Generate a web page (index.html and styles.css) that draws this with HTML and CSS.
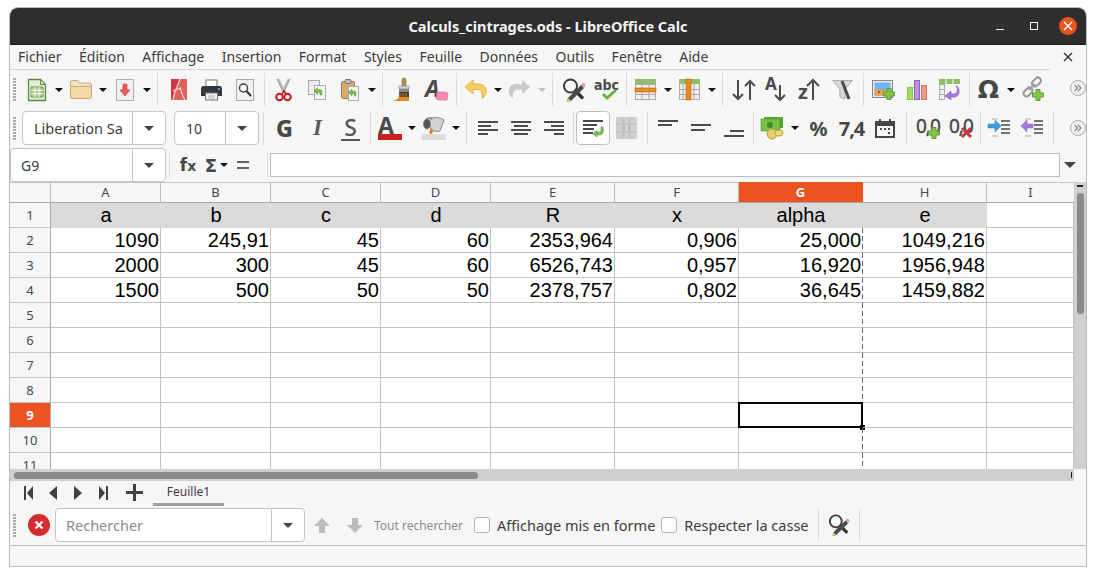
FILE: index.html
```html
<!DOCTYPE html>
<html lang="fr">
<head>
<meta charset="utf-8">
<title>Calculs_cintrages.ods - LibreOffice Calc</title>
<link rel="stylesheet" href="styles.css">
</head>
<body>
<svg class="defs" width="0" height="0">
  <symbol id="findpen" viewBox="0 0 24 24">
    <circle cx="8.5" cy="8" r="6.5" fill="#fff" fill-opacity=".6" stroke="#3c3c3c" stroke-width="2"/>
    <path d="M13 12.5l8 8" stroke="#333" stroke-width="3.4"/>
    <path d="M6 20L19 7l3 3L9 23l-4 1z" fill="#4a4a4a"/>
    <path d="M19 7l1.500-1.500a1.500 1.500 0 0 1 2 0l.5.5a1.500 1.500 0 0 1 0 2L22 10z" fill="#e88cc0"/>
    <path d="M6 20l3 3-4 1z" fill="#e8c860"/>
  </symbol>
  <symbol id="plus" viewBox="0 0 12 12">
    <path d="M4 .5h4V4h3.500v4H8v3.500H4V8H.5V4H4z" fill="#84c24a" stroke="#5f9a32"/>
  </symbol>
</svg>
<div class="window">
  <header class="titlebar">
    <span class="title">Calculs_cintrages.ods - LibreOffice Calc</span>
    <div class="wincontrols">
      <span class="wmin"></span>
      <span class="wmax"></span>
      <span class="wclose"><svg width="10" height="10" viewBox="0 0 10 10"><path d="M1 1l8 8M9 1l-8 8" stroke="#fff" stroke-width="1.500"/></svg></span>
    </div>
  </header>
  <nav class="menubar">
    <div class="menus">
      <span>Fichier</span><span>Édition</span><span>Affichage</span><span>Insertion</span><span>Format</span><span>Styles</span><span>Feuille</span><span>Données</span><span>Outils</span><span>Fenêtre</span><span>Aide</span>
    </div>
    <svg class="menuclose" width="10" height="10" viewBox="0 0 10 10"><path d="M1 1l8 8M9 1l-8 8" stroke="#333" stroke-width="1.400"/></svg>
  </nav>

  <div class="toolbar">
    <span class="grip"></span>
    <span class="btn"><svg width="18" height="22" viewBox="0 0 18 22"><path d="M.5.5h12l5 5v16H.5z" fill="#e4eed8" stroke="#5d8a3e" stroke-width="1.300"/><path d="M12.500.5v5h5z" fill="#cfe0b8" stroke="#5d8a3e"/><path d="M3 8h12v10H3z" fill="#a9cf85" stroke="#6f9c4c"/><path d="M3 11.300h12M3 14.600h12M7 8v10M11 8v10" stroke="#fff"/></svg></span>
    <span class="arrow"></span>
    <span class="btn"><svg width="22" height="19" viewBox="0 0 22 19"><path d="M.5 3a2 2 0 0 1 2-2.500h5l2 2.500h10a2 2 0 0 1 2 2v11.500a2 2 0 0 1-2 2h-17a2 2 0 0 1-2-2z" fill="#efe0c0" stroke="#c4ab7c"/><path d="M.5 6.500h21v10a2 2 0 0 1-2 2h-17a2 2 0 0 1-2-2z" fill="#f3d9a8" stroke="#c9a86e"/></svg></span>
    <span class="arrow"></span>
    <span class="btn"><svg width="18" height="22" viewBox="0 0 18 22"><rect x=".5" y=".5" width="17" height="21" fill="#f0f0f0" stroke="#b0b0b0"/><path d="M7 5h4v6h3l-5 6-5-6h3z" fill="#ea5a5a" stroke="#c83c3c" stroke-width=".6"/></svg></span>
    <span class="arrow"></span>
    <span class="sep wide"></span>
    <span class="btn"><svg width="16" height="21" viewBox="0 0 16 21"><rect width="16" height="21" fill="#c93c44"/><path d="M2 21C3 13 7 7 9 0h7v21z" fill="#e0605a"/><path d="M2 21C3 13 7 7 9 0M9 8c1 5 3 10 5 13M2 12l8-3" stroke="#f6dcdc" stroke-width="1.200" fill="none"/></svg></span>
    <span class="btn"><svg width="21" height="20" viewBox="0 0 21 20"><rect x="5" y="0" width="11" height="7" fill="#fff" stroke="#777"/><path d="M2.500 6h16A2.500 2.500 0 0 1 21 8.500V16h-4v-2H4v2H0V8.500A2.500 2.500 0 0 1 2.500 6z" fill="#34393d"/><rect x="17" y="8" width="2" height="2" fill="#35a8e0"/><rect x="4.500" y="13" width="12" height="7" fill="#f4f4f4" stroke="#777"/><path d="M7 16h7M7 18h7" stroke="#aaa"/></svg></span>
    <span class="btn"><svg width="18" height="22" viewBox="0 0 18 22"><rect x=".5" y=".5" width="17" height="21" fill="#f0f0f0" stroke="#aaa"/><circle cx="7.500" cy="9" r="4" fill="#fff" stroke="#444" stroke-width="1.500"/><path d="M10.500 12l4.500 5" stroke="#333" stroke-width="2"/></svg></span>
    <span class="sep"></span>
    <span class="btn"><svg width="17" height="22" viewBox="0 0 17 22"><path d="M3 0l6.500 13M14 0L7.500 13" stroke="#b8b8b8" stroke-width="2.400" fill="none"/><path d="M2 0l5.500 12M15 0L9.500 12" stroke="#8a8a8a" stroke-width=".7" fill="none"/><circle cx="4.500" cy="18" r="3.300" fill="none" stroke="#c8161d" stroke-width="2"/><circle cx="12.500" cy="18" r="3.300" fill="none" stroke="#c8161d" stroke-width="2"/><path d="M7 15l2-3 2 3" fill="none" stroke="#c8161d" stroke-width="1.600"/></svg></span>
    <span class="btn"><svg width="18" height="20" viewBox="0 0 18 20"><rect x=".5" y=".5" width="11" height="14" fill="#eee" stroke="#aaa"/><rect x="6.500" y="5.500" width="11" height="14" fill="#f6f6f6" stroke="#aaa"/><path d="M14 15v-3.500a2 2 0 0 0-2-2H9.500V7.500L6 11l3.500 3.500v-2h1.500a1 1 0 0 1 1 1V15z" fill="#7cbc54" stroke="#5c9a38" stroke-width=".5"/></svg></span>
    <span class="btn"><svg width="18" height="22" viewBox="0 0 18 22"><rect x=".5" y="2.500" width="13" height="17" rx="1" fill="#d8aa6c" stroke="#9a7a48"/><rect x="4" y=".5" width="6" height="4" rx="1" fill="#bbb" stroke="#777"/><rect x="7.500" y="7.500" width="10" height="14" fill="#f6f6f6" stroke="#aaa"/><path d="M15 17v-3a2 2 0 0 0-2-2h-2v-2l-3.500 3.500L11 17v-2h1.500a1 1 0 0 1 1 1v1z" fill="#7cbc54" stroke="#5c9a38" stroke-width=".5"/></svg></span>
    <span class="arrow"></span>
    <span class="sep wide"></span>
    <span class="btn"><svg width="21" height="23" viewBox="0 0 21 23"><rect x="9" y="0" width="4" height="9" rx="2" fill="#b98c50" stroke="#8a6530" stroke-width=".6"/><rect x="6" y="8" width="10" height="3" fill="#d0d0d0" stroke="#888" stroke-width=".6"/><rect x="6" y="11" width="10" height="3" fill="#888"/><path d="M6 14h10v6H6z" fill="#3f3a34"/><path d="M7 15v5M10 15v5M13 15v5" stroke="#e08a2a"/><path d="M0 23c3-1 5-2 6-4h10v4z" fill="#e8871e"/></svg></span>
    <span class="btn"><svg width="23" height="22" viewBox="0 0 23 22"><text x="0" y="18" class="ico-a">A</text><path d="M12 13h8l3 1-1 7h-9l-2-1z" fill="#f08cb8" stroke="#d86a9c" stroke-width=".6"/></svg></span>
    <span class="sep"></span>
    <span class="btn"><svg width="22" height="20" viewBox="0 0 22 20"><path d="M8 0L0 7l8 7V9.500h4c4 0 6 3 5 9 3-2 5-5 4-9-1-4-4-5.500-8-5.500H8z" fill="#f6cf60" stroke="#d8a52e" stroke-width=".8"/></svg></span>
    <span class="arrow"></span>
    <span class="btn"><svg width="21" height="20" viewBox="0 0 21 20"><path d="M13 0l8 7-8 7V9.500H9c-4 0-6 3-5 9-3-2-5-5-4-9 1-4 4-5.500 8-5.500h5z" fill="#c8c8c8"/></svg></span>
    <span class="arrow dim"></span>
    <span class="sep wide"></span>
    <span class="btn"><svg width="24" height="24"><use href="#findpen"/></svg></span>
    <span class="btn"><svg width="26" height="24" viewBox="0 0 26 24"><text x="0" y="12" class="ico-abc">abc</text><path d="M9 16l4 4 9-8" fill="none" stroke="#6cb33f" stroke-width="3"/></svg></span>
    <span class="sep"></span>
    <span class="btn"><svg width="21" height="21" viewBox="0 0 21 21"><rect x=".5" y=".5" width="20" height="20" fill="#f0f0f0" stroke="#aaa"/><rect width="21" height="5" fill="#8cc063"/><path d="M7 0v21M14 0v21M0 5.500h21M0 15.500h21" stroke="#aaa"/><rect y="9" width="21" height="4" fill="#e98a20" stroke="#c46a10" stroke-width=".6"/></svg></span>
    <span class="arrow"></span>
    <span class="btn"><svg width="21" height="21" viewBox="0 0 21 21"><rect x=".5" y=".5" width="20" height="20" fill="#f0f0f0" stroke="#aaa"/><rect width="21" height="5" fill="#8cc063"/><path d="M0 10.500h21M0 15.500h21M15 0v21M4 0v21" stroke="#aaa"/><rect x="7" width="5" height="21" fill="#e98a20" stroke="#c46a10" stroke-width=".6"/></svg></span>
    <span class="arrow"></span>
    <span class="sep wide"></span>
    <span class="btn"><svg width="24" height="22" viewBox="0 0 24 22"><path d="M6 1v19M1 15l5 5 5-5M18 21V2M13 7l5-5 5 5" fill="none" stroke="#4b4b4b" stroke-width="2"/></svg></span>
    <span class="btn"><svg width="23" height="23" viewBox="0 0 23 23"><text x="0" y="12" class="ico-sort">A</text><path d="M15 7v15M10 17l5 5 5-5" fill="none" stroke="#4b4b4b" stroke-width="2"/></svg></span>
    <span class="btn"><svg width="23" height="23" viewBox="0 0 23 23"><text x="0" y="21" class="ico-sort big">z</text><path d="M15 22V2M9 8l6-6 6 6" fill="none" stroke="#4b4b4b" stroke-width="2"/></svg></span>
    <span class="btn"><svg width="21" height="20" viewBox="0 0 21 20"><path d="M.5.500h20L13 9v10l-5-2V9z" fill="#d8d8d8" stroke="#aaa"/><path d="M10 1l7 18" stroke="#4a4a4a" stroke-width="3"/></svg></span>
    <span class="sep mid"></span>
    <span class="btn"><svg width="23" height="20" viewBox="0 0 23 20"><rect x=".5" y=".5" width="20" height="17" fill="#e8e8e8" stroke="#888"/><rect x="2.500" y="2.500" width="16" height="13" fill="#6fb5e5"/><path d="M2.500 10h16v5.500h-16z" fill="#e7a33c"/><path d="M6 11h2v2H6z" fill="#d83b2a"/><use href="#plus" x="11" y="8" width="12" height="12"/></svg></span>
    <span class="btn"><svg width="20" height="20" viewBox="0 0 20 20"><rect x=".5" y="7.500" width="5" height="12" fill="#a4d95c" stroke="#8cc04a"/><rect x="7.500" y=".5" width="5" height="19" fill="#b796dc" stroke="#8a62b8"/><rect x="14.500" y="5.500" width="5" height="14" fill="#ec9a8a" stroke="#d07866"/></svg></span>
    <span class="btn"><svg width="21" height="21" viewBox="0 0 21 21"><rect width="21" height="5" fill="#8cc063"/><path d="M7 0v5M14 0v5" stroke="#fff"/><rect x=".5" y="5.500" width="5" height="15" fill="#eee" stroke="#aaa"/><path d="M0 10.500h5M0 15.500h5" stroke="#aaa"/><path d="M17 7c3 4 1 8-3 8h-2v-3l-6 5 6 4v-3h3c5 0 7-6 3-11z" fill="#a878d8" stroke="#8458b8" stroke-width=".6"/></svg></span>
    <span class="sep"></span>
    <span class="btn"><span class="omega">Ω</span></span>
    <span class="arrow"></span>
    <span class="btn"><svg width="23" height="23" viewBox="0 0 23 23"><g fill="none" stroke="#9a9a9a" stroke-width="2"><rect x="10.500" y="1" width="10" height="6" rx="3" transform="rotate(-45 15.500 4)"/><rect x="2" y="11" width="10" height="6" rx="3" transform="rotate(-45 7 14)"/><path d="M8 12l6-6"/></g><use href="#plus" x="11" y="11" width="12" height="12"/></svg></span>
    <span class="more"><svg width="16" height="16" viewBox="0 0 16 16"><circle cx="8" cy="8" r="7.500" fill="#f2f2f2" stroke="#aaa"/><path d="M4.500 5l3 3-3 3M8 5l3 3-3 3" fill="none" stroke="#8a8a8a" stroke-width="1.300"/></svg></span>
  </div>

  <div class="toolbar fmt">
    <span class="grip"></span>
    <div class="combo font"><span class="val">Liberation Sa</span><span class="drop"></span></div>
    <div class="combo size"><span class="val">10</span><span class="drop"></span></div>
    <span class="sep nine"></span>
    <span class="btn"><span class="tx-g">G</span></span>
    <span class="btn"><span class="tx-i">I</span></span>
    <span class="btn"><span class="tx-s">S</span></span>
    <span class="sep"></span>
    <span class="btn"><svg width="24" height="23" viewBox="0 0 24 23"><text x="0" y="17" class="ico-color">A</text><rect y="17" width="24" height="6" fill="#c9211e"/></svg></span>
    <span class="arrow"></span>
    <span class="btn"><svg width="24" height="24" viewBox="0 0 24 24"><path d="M6 3c5-2 12-2 16 1l-4 11c-3 1-7 0-9-1z" fill="#d4d4d4" stroke="#888"/><ellipse cx="5" cy="8" rx="3.500" ry="5" fill="#555" stroke="#888"/><path d="M3 4c3-3 7-3 7 0" fill="none" stroke="#777"/><rect y="18" width="24" height="6" fill="#dcdcdc"/><path d="M7 17c1-3 2-4 3-5 1 2 1 4 0 6z" fill="#e8781e"/></svg></span>
    <span class="arrow"></span>
    <span class="sep wide"></span>
    <span class="btn"><svg width="20" height="15" viewBox="0 0 20 15"><path d="M0 1h20M0 5h13M0 9h20M0 13h10" stroke="#4a4a4a" stroke-width="2"/></svg></span>
    <span class="btn"><svg width="20" height="15" viewBox="0 0 20 15"><path d="M0 1h20M3 5h14M0 9h20M3 13h14" stroke="#4a4a4a" stroke-width="2"/></svg></span>
    <span class="btn"><svg width="20" height="15" viewBox="0 0 20 15"><path d="M0 1h20M7 5h13M0 9h20M10 13h10" stroke="#4a4a4a" stroke-width="2"/></svg></span>
    <span class="sep"></span>
    <span class="btn active"><svg width="21" height="17" viewBox="0 0 21 17"><path d="M0 1h20M0 5h14M0 9h11M0 13h10" stroke="#4a4a4a" stroke-width="2"/><path d="M18 7v3a2 2 0 0 1-2 2h-2v-2l-4 4 4 3v-2h3c3 0 4-3 3-8z" fill="#7cbc54" stroke="#5c9a38" stroke-width=".5"/></svg></span>
    <span class="btn"><svg width="21" height="22" viewBox="0 0 21 22"><rect width="21" height="22" rx="1" fill="#d0d0d0"/><path d="M7 0v22M14 0v22M0 7h21M0 15h21" stroke="#bbb"/><path d="M9 9l-2 2 2 2M12 9l2 2-2 2" fill="none" stroke="#aaa"/></svg></span>
    <span class="sep mid"></span>
    <span class="btn"><svg width="20" height="16" viewBox="0 0 20 16"><path d="M0 1h20M0 5h14" stroke="#4a4a4a" stroke-width="2"/></svg></span>
    <span class="btn"><svg width="20" height="10" viewBox="0 0 20 10"><path d="M0 2h20M0 7h14" stroke="#4a4a4a" stroke-width="2"/></svg></span>
    <span class="btn valign-b"><svg width="20" height="8" viewBox="0 0 20 8"><path d="M6 1h14M0 6h20" stroke="#4a4a4a" stroke-width="2"/></svg></span>
    <span class="sep"></span>
    <span class="btn"><svg width="24" height="22" viewBox="0 0 24 22"><rect x="3" y="0" width="19" height="11" fill="#55a832"/><rect y="2" width="19" height="12" fill="#76c043" stroke="#4d9528" stroke-width=".6"/><circle cx="9" cy="8" r="3" fill="#3e8a20"/><ellipse cx="11" cy="17" rx="5" ry="5" fill="#e6cd6e" stroke="#b89c38"/><ellipse cx="18" cy="16" rx="4" ry="3" fill="#f0dc80" stroke="#b89c38"/></svg></span>
    <span class="arrow gapr"></span>
    <span class="btn"><span class="tx-num">%</span></span>
    <span class="btn"><span class="tx-num tight">7,4</span></span>
    <span class="btn"><svg width="20" height="20" viewBox="0 0 20 20"><path d="M0 3h4V1h2v2h8V1h2v2h4v17H0zM2 8v10h16V8z" fill="#474747"/><path d="M5 10h2v2H5zM9 10h2v2H9zM13 10h2v2h-2zM13 14h2v2h-2z" fill="#474747"/></svg></span>
    <span class="sep wide"></span>
    <span class="btn"><svg width="24" height="22" viewBox="0 0 24 22"><text x="0" y="16" class="ico-zero">0,0</text><use href="#plus" x="12" y="10" width="12" height="12"/></svg></span>
    <span class="btn"><svg width="24" height="22" viewBox="0 0 24 22"><text x="0" y="16" class="ico-zero">0,0</text><path d="M13 11l9 9M22 11l-9 9" stroke="#c8353a" stroke-width="3"/></svg></span>
    <span class="sep"></span>
    <span class="btn"><svg width="23" height="18" viewBox="0 0 23 18"><path d="M13 2h9M13 6h9M13 10h9M13 14h9" stroke="#4a4a4a" stroke-width="1.400"/><path d="M4 0h6M4 17h6" stroke="#aaa"/><path d="M0 5h7V1l6 6-6 6V9H0z" fill="#3f9be0" stroke="#2a7cc0" stroke-width=".5"/></svg></span>
    <span class="btn"><svg width="23" height="18" viewBox="0 0 23 18"><path d="M13 2h9M13 6h9M13 10h9M13 14h9" stroke="#4a4a4a" stroke-width="1.400"/><path d="M4 0h6M4 17h6" stroke="#aaa"/><path d="M12 5H6V1L0 7l6 6V9h6z" fill="#a878d8" stroke="#8458b8" stroke-width=".5"/></svg></span>
    <span class="sep mid"></span>
    <span class="more"><svg width="16" height="16" viewBox="0 0 16 16"><circle cx="8" cy="8" r="7.500" fill="#f2f2f2" stroke="#aaa"/><path d="M4.500 5l3 3-3 3M8 5l3 3-3 3" fill="none" stroke="#8a8a8a" stroke-width="1.300"/></svg></span>
  </div>

  <div class="formulabar">
    <div class="combo name"><span class="val">G9</span><span class="drop"></span></div>
    <span class="sep"></span>
    <span class="fx">f<small>x</small></span>
    <span class="sigma">Σ</span>
    <span class="arrow small"></span>
    <span class="equals"></span>
    <span class="sep"></span>
    <div class="input"></div>
    <span class="drop big"></span>
  </div>

  <div class="main">
    <div class="sheet">
      <div class="hd corner"></div><div class="hd">A</div><div class="hd">B</div><div class="hd">C</div><div class="hd">D</div><div class="hd">E</div><div class="hd">F</div><div class="hd sel">G</div><div class="hd">H</div><div class="hd">I</div>

      <div class="rh">1</div><div class="c t">a</div><div class="c t">b</div><div class="c t">c</div><div class="c t">d</div><div class="c t">R</div><div class="c t">x</div><div class="c t">alpha</div><div class="c t">e</div><div class="c"></div>

      <div class="rh">2</div><div class="c">1090</div><div class="c">245,91</div><div class="c">45</div><div class="c">60</div><div class="c">2353,964</div><div class="c">0,906</div><div class="c pb">25,000</div><div class="c">1049,216</div><div class="c"></div>

      <div class="rh">3</div><div class="c">2000</div><div class="c">300</div><div class="c">45</div><div class="c">60</div><div class="c">6526,743</div><div class="c">0,957</div><div class="c pb">16,920</div><div class="c">1956,948</div><div class="c"></div>

      <div class="rh">4</div><div class="c">1500</div><div class="c">500</div><div class="c">50</div><div class="c">50</div><div class="c">2378,757</div><div class="c">0,802</div><div class="c pb">36,645</div><div class="c">1459,882</div><div class="c"></div>

      <div class="rh">5</div><div class="c"></div><div class="c"></div><div class="c"></div><div class="c"></div><div class="c"></div><div class="c"></div><div class="c pb"></div><div class="c"></div><div class="c"></div>

      <div class="rh">6</div><div class="c"></div><div class="c"></div><div class="c"></div><div class="c"></div><div class="c"></div><div class="c"></div><div class="c pb"></div><div class="c"></div><div class="c"></div>

      <div class="rh">7</div><div class="c"></div><div class="c"></div><div class="c"></div><div class="c"></div><div class="c"></div><div class="c"></div><div class="c pb"></div><div class="c"></div><div class="c"></div>

      <div class="rh">8</div><div class="c"></div><div class="c"></div><div class="c"></div><div class="c"></div><div class="c"></div><div class="c"></div><div class="c pb"></div><div class="c"></div><div class="c"></div>

      <div class="rh sel">9</div><div class="c"></div><div class="c"></div><div class="c"></div><div class="c"></div><div class="c"></div><div class="c"></div><div class="c pb cur"><span class="cursor"></span></div><div class="c"></div><div class="c"></div>

      <div class="rh">10</div><div class="c"></div><div class="c"></div><div class="c"></div><div class="c"></div><div class="c"></div><div class="c"></div><div class="c pb"></div><div class="c"></div><div class="c"></div>

      <div class="rh">11</div><div class="c"></div><div class="c"></div><div class="c"></div><div class="c"></div><div class="c"></div><div class="c"></div><div class="c pb"></div><div class="c"></div><div class="c"></div>
    </div>
    <div class="vscroll"><span class="vcap"></span><span class="vthumb"></span></div>
  </div>
  <div class="hscrollrow">
    <div class="hscroll"><span class="hthumb"></span><span class="htick"></span></div>
    <div class="scrollcorner"></div>
  </div>

  <div class="tabbar">
    <span class="nav"><svg width="9" height="14" viewBox="0 0 9 14"><path d="M0 0h2v14H0zM9 0v14L3 7z" fill="#404040"/></svg></span>
    <span class="nav"><svg width="9" height="14" viewBox="0 0 9 14"><path d="M8 0v14L0 7z" fill="#404040"/></svg></span>
    <span class="nav"><svg width="9" height="14" viewBox="0 0 9 14"><path d="M0 0v14l8-7z" fill="#404040"/></svg></span>
    <span class="nav"><svg width="9" height="14" viewBox="0 0 9 14"><path d="M0 0v14l6-7zM7 0h2v14H7z" fill="#404040"/></svg></span>
    <svg class="addtab" width="17" height="17" viewBox="0 0 17 17"><path d="M7 0h3v7h7v3h-7v7H7v-7H0V7h7z" fill="#404040"/></svg>
    <span class="tab">Feuille1</span>
  </div>

  <div class="findbar">
    <span class="grip"></span>
    <span class="fclose"><svg width="22" height="22" viewBox="0 0 22 22"><circle cx="11" cy="11" r="11" fill="#d52b30"/><path d="M7.500 7.500l7 7M14.500 7.500l-7 7" stroke="#fff" stroke-width="2.200"/></svg></span>
    <div class="combo search"><span class="val ph">Rechercher</span><span class="drop"></span></div>
    <span class="fbtn"><svg width="16" height="15" viewBox="0 0 16 15"><path d="M8 0l8 8h-5v7H5V8H0z" fill="#bdbdbd"/></svg></span>
    <span class="fbtn"><svg width="16" height="15" viewBox="0 0 16 15"><path d="M8 15l8-8h-5V0H5v7H0z" fill="#bdbdbd"/></svg></span>
    <span class="findall">Tout rechercher</span>
    <label class="chk"><span class="box"></span>Affichage mis en forme</label>
    <label class="chk"><span class="box"></span>Respecter la casse</label>
    <span class="sep mid"></span>
    <span class="fpen"><svg width="22" height="22"><use href="#findpen"/></svg></span>
    <span class="sep mid"></span>
  </div>
  <div class="statusbar"></div>
</div>
</body>
</html>
```

FILE: styles.css
```css
* { box-sizing: border-box; }
html, body { margin: 0; padding: 0; background: #fff; }
body { font-family: "Noto Sans", "Open Sans", sans-serif; color: #3c3c3c; overflow: hidden; }
.defs { position: absolute; }
.btn svg { overflow: visible; }

.window {
  margin: 7px 0 0 9px;
  width: 1078px;
  height: 560px;
  border: 1px solid #b9b9b9;
  border-radius: 9px 9px 0 0;
  background: #f6f6f6;
  display: flex;
  flex-direction: column;
  overflow: hidden;
}

.titlebar {
  height: 37px;
  flex: none;
  background: #2f2e2e;
  border-bottom: 1px solid #1c1c1c;
  color: #f4f4f4;
  display: flex;
  align-items: center;
  justify-content: center;
  position: relative;
}
.title { font-size: 14.5px; font-weight: 700; margin-top: -1px; }
.wincontrols {
  position: absolute;
  right: 9px;
  top: 9px;
  display: flex;
  align-items: center;
}
.wmin { width: 8px; height: 1px; background: #f0f0f0; margin: 6px 26px 0 0; }
.wmax { width: 8px; height: 8px; border: 1px solid #f4f4f4; margin-right: 21px; }
.wclose {
  width: 18px; height: 18px; border-radius: 50%;
  background: #e95420;
  display: flex; align-items: center; justify-content: center;
}

.menubar {
  height: 25px;
  flex: none;
  display: flex;
  align-items: center;
  position: relative;
}
.menus {
  width: 1040px;
  height: 25px;
  border-bottom: 1px solid #d6d6d6;
  display: flex;
  gap: 17.5px;
  align-items: center;
  padding: 0 0 1px 8px;
  font-size: 14px;
}
.menuclose { position: absolute; right: 13px; top: 7px; }

.toolbar {
  height: 38px;
  flex: none;
  display: flex;
  align-items: center;
  padding-top: 1px;
  position: relative;
}
.toolbar.fmt { height: 40px; padding-top: 0; }
.grip {
  width: 3px;
  height: 23px;
  margin: 0 4px 0 3px;
  background: repeating-linear-gradient(to bottom, #aaa 0 2px, transparent 2px 3px);
  flex: none;
}
.btn {
  width: 33px;
  height: 30px;
  flex: none;
  display: flex;
  align-items: center;
  justify-content: center;
  color: #474747;
}
.btn.active {
  width: 34px;
  height: 34px;
  background: #fff;
  border: 1px solid #bdbdbd;
  border-radius: 4px;
}
.valign-b { align-items: flex-end; padding-bottom: 5px; }
.arrow {
  width: 11px;
  height: 30px;
  flex: none;
  display: flex;
  align-items: center;
  justify-content: center;
}
.arrow::after {
  content: "";
  border-left: 4px solid transparent;
  border-right: 4px solid transparent;
  border-top: 4px solid #111;
}
.arrow.dim::after { border-top-color: #bdbdbd; }
.arrow.gapr { margin-right: 2px; }
.arrow.small { width: 9px; }
.sep {
  width: 6px;
  height: 33px;
  flex: none;
  display: flex;
  justify-content: center;
}
.sep::after { content: ""; width: 1px; background: #dcdcdc; }
.sep.wide { width: 10px; }
.sep.nine { width: 9px; }
.sep.mid { width: 8px; }
.more { position: absolute; right: 0; top: 10px; width: 16px; height: 16px; display: block; line-height: 0; }
.fmt .more { top: 12px; }

.omega { font: 700 25px "DejaVu Sans", sans-serif; color: #474747; }
.tx-g { font: 800 23px "Noto Sans", sans-serif; color: #474747; }
.tx-i { font: italic 700 23px "Liberation Serif", serif; color: #5a5a5a; }
.tx-s { font: 500 23px/24px "Noto Sans", sans-serif; color: #555; border-bottom: 2px solid #555; padding: 0 3px; }
.tx-num { font: 700 20px "Noto Sans", sans-serif; color: #474747; }
.tx-num.tight { letter-spacing: -1px; }
.ico-a { font: italic 700 23px "Noto Sans", sans-serif; fill: #4a4a4a; }
.ico-abc { font: 700 14px "DejaVu Sans Condensed", "DejaVu Sans", sans-serif; fill: #4a4a4a; }
.ico-sort { font: 700 17px "Noto Sans", sans-serif; fill: #4b4b4b; }
.ico-sort.big { font-size: 20px; }
.ico-color { font: 700 23px "Noto Sans", sans-serif; fill: #4a4a4a; }
.ico-zero { font: 400 19px "Noto Sans", sans-serif; fill: #474747; letter-spacing: -1px; stroke: #474747; stroke-width: .4; }

.combo {
  display: flex;
  flex: none;
  height: 34px;
  background: #fff;
  border: 1px solid #c4c4c4;
  border-radius: 4px;
  font-size: 14px;
  align-items: stretch;
}
.combo .val { flex: 1; display: flex; align-items: center; padding-left: 11px; white-space: nowrap; overflow: hidden; }
.combo .drop { width: 33px; border-left: 1px solid #c4c4c4; display: flex; align-items: center; justify-content: center; }
.drop::after {
  content: "";
  border-left: 5px solid transparent;
  border-right: 5px solid transparent;
  border-top: 5px solid #444;
}
.combo.font { width: 144px; margin-left: 2px; font-size: 14.5px; }
.combo.size { width: 85px; margin-left: 8px; margin-right: 0; }
.combo.name { width: 156px; border-radius: 4px; }
.combo.name .val { padding-left: 10px; }
.combo.name .drop { width: 33px; }

.formulabar {
  height: 34px;
  flex: none;
  display: flex;
  align-items: center;
}
.formulabar .sep { height: 25px; }
.formulabar .combo { height: 34px; }
.fx { width: 30px; margin-left: 1px; text-align: center; font: 700 17px "DejaVu Sans", sans-serif; color: #474747; }
.fx small { font-size: 14px; }
.sigma { width: 16px; text-align: center; font: 700 18px "DejaVu Sans", sans-serif; color: #474747; }
.equals { width: 12px; height: 8px; margin: 0 15px 0 9px; border-top: 2px solid #666; border-bottom: 2px solid #666; flex: none; }
.input { width: 790px; height: 24px; background: #fff; border: 1px solid #bdbdbd; flex: none; margin-left: 0; }
.drop.big { margin-left: 4px; flex: none; display: block; width: 11px; height: 6px; line-height: 0; }
.drop.big::after { display: block; width: 0; border-left-width: 6px; border-right-width: 6px; border-top-width: 6px; }

.main { height: 287px; flex: none; display: flex; }
.sheet {
  width: 1064px;
  height: 287px;
  overflow: hidden;
  background: #fff;
  display: grid;
  grid-template-columns: 41px 110px 110px 110px 110px 124px 124px 124px 124px 87px;
  grid-template-rows: 21px repeat(11, 25px);
}
.hd {
  background: #f6f6f6;
  border-top: 1px solid #c4c4c4;
  border-bottom: 1px solid #a8a8a8;
  border-right: 1px solid #bbb;
  font-size: 13px;
  text-align: center;
  line-height: 19px;
  color: #3d4a5c;
}
.hd:nth-child(10) { border-right: 0; }
.hd.sel { background: #e95420; color: #fff; font-weight: 700; border-color: #e95420; border-bottom-color: #a8a8a8; }
.rh {
  background: #f6f6f6;
  border-right: 1px solid #a8a8a8;
  border-bottom: 1px solid #c4c4c4;
  font-size: 13px;
  text-align: center;
  line-height: 25px;
  color: #3d4a5c;
}
.rh.sel { background: #e95420; color: #fff; font-weight: 700; }
.c {
  border-right: 1px solid #c2c2c2;
  border-bottom: 1px solid #c2c2c2;
  font: 20px/25px "Liberation Sans", Arial, sans-serif;
  color: #000;
  text-align: right;
  padding-right: 1px;
  white-space: nowrap;
  position: relative;
}
.c.t { background: #dadada; border: 0; text-align: center; padding: 0; line-height: 24px; }
.c.pb {
  border-right: 1px solid transparent;
  background: repeating-linear-gradient(to bottom, #666 0 5px, transparent 5px 8px) right top / 1px 100% no-repeat border-box;
}
.cursor {
  position: absolute;
  left: -1px;
  top: -1px;
  width: 125px;
  height: 26px;
  border: 2px solid #000;
}
.cursor::after {
  content: "";
  position: absolute;
  right: -4px;
  bottom: -4px;
  width: 5px;
  height: 5px;
  background: #000;
}

.vscroll { width: 12px; background: #cfcfcf; position: relative; flex: none; }
.vcap { position: absolute; left: 3px; top: 3px; width: 6px; height: 2px; background: #222; }
.vthumb { position: absolute; left: 3px; top: 11px; width: 7px; height: 121px; background: #8a8a8a; border-radius: 3px; }

.hscrollrow { height: 12px; flex: none; display: flex; }
.hscroll { width: 1064px; background: #cfcfcf; position: relative; }
.hthumb { position: absolute; left: 4px; top: 3px; width: 464px; height: 7px; background: #8a8a8a; border-radius: 3px; }
.htick { position: absolute; right: 2px; top: 3px; width: 1px; height: 6px; background: #222; }
.scrollcorner { flex: 1; background: #f6f6f6; }

.tabbar { height: 25px; flex: none; display: flex; align-items: center; padding-left: 14px; }
.nav { width: 25px; display: flex; justify-content: flex-start; height: 14px; line-height: 0; margin-top: -2px; }
.addtab { margin: -2px 10px 0 2px; }
.tab {
  width: 71px;
  height: 25px;
  font-size: 12px;
  text-align: center;
  line-height: 22px;
  border-bottom: 3px solid #a0a0a0;
  align-self: flex-start;
}

.findbar {
  height: 40px;
  flex: none;
  border-bottom: 1px solid #bdbdbd;
  padding-bottom: 1px;
  display: flex;
  align-items: center;
}
.findbar .grip { margin-right: 12px; }
.fclose { width: 22px; height: 22px; margin-right: 5px; line-height: 0; flex: none; }
.combo.search { width: 250px; font-size: 14.5px; }
.combo.search .val { padding-left: 10px; }
.ph { color: #8a8a8a; }
.fbtn { width: 33px; line-height: 0; flex: none; display: flex; justify-content: center; }
.findall { font-size: 12px; color: #8a8a8a; margin: 0 11px 0 3px; white-space: nowrap; }
.chk { display: flex; align-items: center; font-size: 14.5px; white-space: nowrap; margin-right: 6px; }
.box { width: 16px; height: 16px; background: #fff; border: 1px solid #b4b4b4; border-radius: 3px; margin-right: 7px; flex: none; }
.findbar .sep { height: 33px; }
.fpen { width: 33px; display: flex; justify-content: center; line-height: 0; }

.statusbar { flex: 1; }
```
